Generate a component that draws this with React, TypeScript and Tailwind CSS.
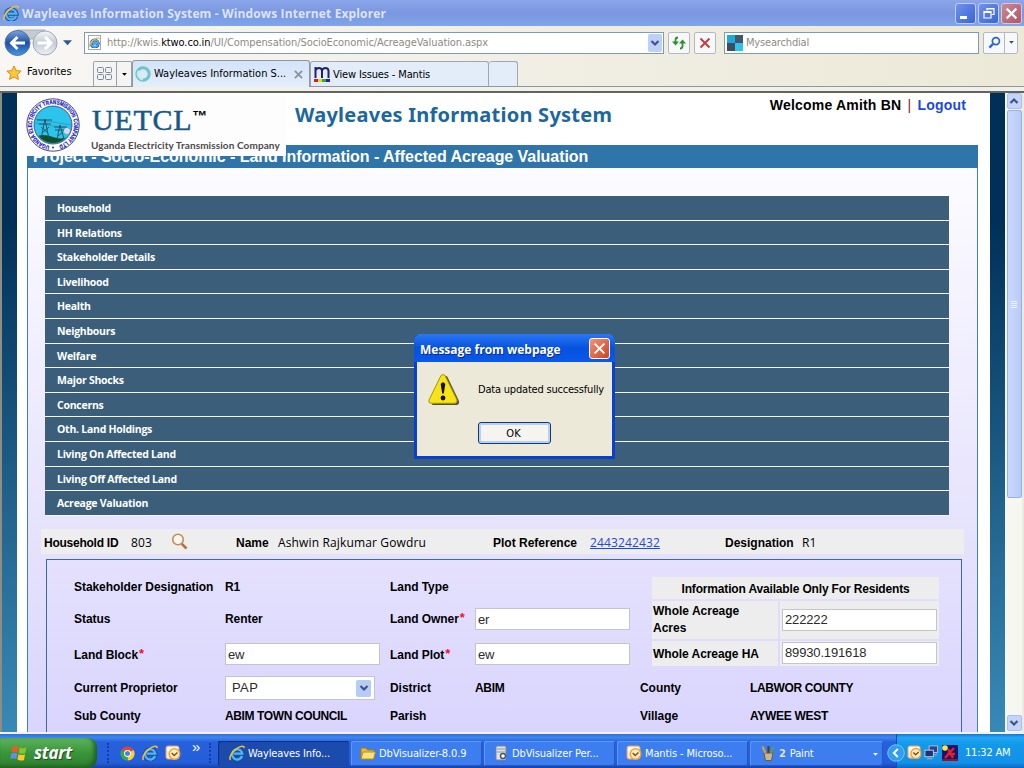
import type { ReactNode } from 'react';

const TAHOMA = "font-['DejaVu_Sans_Condensed','DejaVu_Sans',sans-serif] [font-stretch:condensed]";
const OPEN = "font-['Open_Sans','Noto_Sans',sans-serif]";

function IeIcon({ className }: { className: string }) {
  return (
    <svg viewBox="0 0 16 16" className={className}>
      <path d="M13.300 11.200A5.200 5.200 0 1 1 13.500 8.800H5" fill="none" stroke="#1450a4" strokeWidth="4" />
      <path d="M13.100 11A5.100 5.100 0 1 1 13.300 8.600H5" fill="none" stroke="#52b4f0" strokeWidth="2.400" />
      <path d="M1.600 14.800C-.6 13 3 6.600 8 3.400C11.500 1 15.600 .2 15 3.200" fill="none" stroke="#f7bd2c" strokeWidth="1.600" />
    </svg>
  );
}

function OutlookIcon({ className }: { className: string }) {
  return (
    <svg viewBox="0 0 16 16" className={className}>
      <rect x="1" y="1" width="13" height="13" rx="2" fill="#fbe9d2" stroke="#e6a262" />
      <path d="M2 2h11v4L8 9 2 6z" fill="#fffaf2" />
      <circle cx="9.500" cy="9" r="5.300" fill="#fdeebd" stroke="#eea23c" strokeWidth="1.400" />
      <path d="M6.700 8 9.200 10.500l3.300-3" fill="none" stroke="#8a4b12" strokeWidth="1.500" />
    </svg>
  );
}

function Chevron({ up = false, className }: { up?: boolean; className: string }) {
  return (
    <svg viewBox="0 0 10 8" className={className}>
      <path d={up ? 'M1.500 6 5 2.500 8.500 6' : 'M1.500 2 5 5.500 8.500 2'} fill="none" stroke="#3f5580" strokeWidth="2.200" />
    </svg>
  );
}

function Caret({ className }: { className: string }) {
  return (
    <svg viewBox="0 0 8 5" className={className}>
      <path d="M0 0h8L4 4.600z" fill="currentColor" />
    </svg>
  );
}

function TitleBar() {
  return (
    <div className="flex h-[26px] shrink-0 items-center bg-gradient-to-b from-[#8ba6ea] via-[#7a96df] to-[#7fa5ea] pl-[3px] pr-[2px]">
      <IeIcon className="h-4 w-4" />
      <div className={`${OPEN} ml-[3px] flex-1 whitespace-nowrap pt-px text-[12px] font-bold leading-[26px] tracking-[0.13px] text-[#dbe5fb]`}>
        Wayleaves Information System - Windows Internet Explorer
      </div>
      <div className="flex gap-[2px]">
        <div className="flex h-[21px] w-[21px] items-end rounded-[3px] border border-[#c3d0f3] bg-gradient-to-br from-[#6f92ea] to-[#3a63d8] p-1">
          <div className="h-[3px] w-[7px] bg-white" />
        </div>
        <div className="flex h-[21px] w-[21px] items-center justify-center rounded-[3px] border border-[#c3d0f3] bg-gradient-to-br from-[#6f92ea] to-[#3a63d8]">
          <svg viewBox="0 0 12 12" className="h-3 w-3">
            <path d="M4 3.500V1.500h7v6H8.500M4 2h7" fill="none" stroke="#fff" strokeWidth="1.200" />
            <path d="M1 4.500h7v6.500H1zM1 5.500h7" fill="none" stroke="#fff" strokeWidth="1.200" />
          </svg>
        </div>
        <div className="flex h-[21px] w-[21px] items-center justify-center rounded-[3px] border border-[#dcc5d6] bg-gradient-to-br from-[#c98a94] to-[#b0566a]">
          <svg viewBox="0 0 12 12" className="h-[13px] w-[13px]">
            <path d="M1.500 1.500l9 9M10.500 1.500l-9 9" stroke="#fff" strokeWidth="2" />
          </svg>
        </div>
      </div>
    </div>
  );
}

function NavBar() {
  return (
    <div className="flex h-[33px] shrink-0 items-center pl-[4px] pr-[6px]">
      <svg viewBox="0 0 54 28" className="h-[28px] w-[54px]">
        <defs>
          <linearGradient id="back" x1="0" y1="0" x2="0" y2="1">
            <stop offset="0" stopColor="#7aa4dd" />
            <stop offset=".5" stopColor="#1f4fa6" />
            <stop offset="1" stopColor="#3f9be8" />
          </linearGradient>
          <linearGradient id="fwd" x1="0" y1="0" x2="0" y2="1">
            <stop offset="0" stopColor="#f4f6f9" />
            <stop offset=".5" stopColor="#c3cbd6" />
            <stop offset="1" stopColor="#eef2f7" />
          </linearGradient>
        </defs>
        <path d="M13 1h28v9H13z" fill="#c4cad3" stroke="#a9b0ba" />
        <circle cx="13.500" cy="14" r="12.500" fill="url(#back)" stroke="#5a7194" />
        <circle cx="41" cy="14" r="12" fill="url(#fwd)" stroke="#a0a8b4" />
        <path d="M21 14H8M13.500 8 7.500 14l6 6" fill="none" stroke="#fff" strokeWidth="3" />
        <path d="M33.500 14h13M41 8l6 6-6 6" fill="none" stroke="#fff" strokeWidth="3" />
      </svg>
      <Caret className="ml-[5px] h-[6px] w-[9px] text-[#2d5c93]" />
      <div className="ml-[12px] flex h-[22px] w-[580px] items-center border border-[#7d9ab8] bg-white pl-[3px]">
        <div className="flex h-[15px] w-[13px] items-center justify-center border border-[#a9a9a9] bg-white">
          <IeIcon className="h-[11px] w-[11px]" />
        </div>
        <div className={`${TAHOMA} ml-[6px] flex-1 whitespace-nowrap pt-[2px] text-[11px] tracking-[-0.09px] text-[#8b8b85]`}>
          http://kwis.<span className="text-black">ktwo.co.in</span>/UI/Compensation/SocioEconomic/AcreageValuation.aspx
        </div>
        <div className="mr-px flex h-[18px] w-[14px] items-center justify-center rounded-[2px] bg-[#bcd0fa]">
          <Chevron className="h-[8px] w-[10px]" />
        </div>
      </div>
      <div className="ml-[4px] flex h-[22px] w-[22px] items-center justify-center rounded-[2px] border border-[#b3b9c4] bg-[#f7f8fa]">
        <svg viewBox="0 0 16 14" className="h-[14px] w-[16px]">
          <path d="M7 1.500Q4.500 1.500 4.500 4V7M9 12.500Q11.500 12.500 11.500 10V6" fill="none" stroke="#2f8f2f" strokeWidth="1.800" />
          <path d="M1 5.500h7L4.500 9.500zM8 7.500h7L11.500 3.500z" fill="#2f8f2f" />
        </svg>
      </div>
      <div className="ml-[4px] flex h-[22px] w-[22px] items-center justify-center rounded-[2px] border border-[#b3b9c4] bg-[#f7f8fa]">
        <svg viewBox="0 0 12 12" className="h-[12px] w-[12px]">
          <path d="M1.500 1.500l9 9M10.500 1.500l-9 9" stroke="#c63a40" strokeWidth="1.900" />
        </svg>
      </div>
      <div className="ml-[8px] flex h-[22px] w-[255px] items-center border border-[#7d9ab8] bg-white pl-[2px]">
        <div className="grid h-4 w-4 grid-cols-2 grid-rows-2">
          <span className="bg-[#1fa9d8]" />
          <span className="bg-[#44566b]" />
          <span className="bg-[#3d4c60]" />
          <span className="bg-[#2cc3ee]" />
        </div>
        <span className={`${TAHOMA} ml-[3px] pt-[2px] text-[11px] tracking-[-0.17px] text-[#8b8b85]`}>Mysearchdial</span>
      </div>
      <div className="ml-[4px] flex h-[22px] w-[35px] items-center rounded-[2px] border border-[#b3b9c4] bg-[#f7f8fa]">
        <div className="flex h-full w-[21px] items-center justify-center border-r border-[#b3b9c4]">
          <svg viewBox="0 0 14 14" className="h-[13px] w-[13px]">
            <circle cx="8.500" cy="5.500" r="3.800" fill="none" stroke="#2a62d8" strokeWidth="1.800" />
            <path d="M5.500 8.500 1.500 12.500" stroke="#2a62d8" strokeWidth="2.400" />
          </svg>
        </div>
        <Caret className="mx-auto h-[3px] w-[5px] text-[#27508f]" />
      </div>
    </div>
  );
}

function TabRow() {
  return (
    <div className="flex h-[28px] shrink-0 items-end border-b border-[#8f989f] pl-[6px]">
      <div className="flex h-[27px] w-[87px] items-center">
        <svg viewBox="0 0 16 16" className="h-4 w-4">
          <path d="M8 1l2.100 4.600 5 .5-3.700 3.300 1 5L8 12l-4.400 2.400 1-5L.9 6.100l5-.5z" fill="#ffc83a" stroke="#d98c1c" />
        </svg>
        <span className={`${TAHOMA} ml-[5px] text-[11px]`}>Favorites</span>
      </div>
      <div className="flex h-[25px] w-[39px] rounded-t-[2px] border border-b-0 border-[#9aa3ad] bg-[#f4f4f2]">
        <div className="flex w-[23px] items-center justify-center border-r border-[#9aa3ad]">
          <svg viewBox="0 0 16 14" className="h-[14px] w-[16px]">
            <g fill="#eef1f5" stroke="#7f8894">
              <rect x=".5" y=".5" width="6" height="5" rx="1" />
              <rect x="8.500" y=".5" width="6" height="5" rx="1" />
              <rect x=".5" y="7.500" width="6" height="5" rx="1" />
              <rect x="8.500" y="7.500" width="6" height="5" rx="1" />
            </g>
          </svg>
        </div>
        <Caret className="m-auto h-[3px] w-[5px] text-black" />
      </div>
      <div className="-mb-px flex h-[27px] w-[178px] items-center rounded-t-[3px] border border-b-0 border-[#8f989f] bg-gradient-to-b from-[#d3e3f9] to-[#e4eefb] pl-[2px]">
        <svg viewBox="0 0 16 16" className="h-4 w-4">
          <circle cx="8" cy="8" r="6.200" fill="none" stroke="#6cc6c6" strokeWidth="3" />
          <path d="M4 4.500A5.500 5.500 0 0 0 8 13.500" fill="none" stroke="#c2ecea" strokeWidth="1.800" />
        </svg>
        <span className={`${TAHOMA} ml-[3px] flex-1 whitespace-nowrap text-[11px]`}>Wayleaves Information S...</span>
        <svg viewBox="0 0 10 10" className="mr-[6px] h-[9px] w-[9px]">
          <path d="M1 1l8 8M9 1L1 9" stroke="#8b929b" strokeWidth="2" />
        </svg>
      </div>
      <div className="flex h-[25px] w-[179px] items-center rounded-t-[3px] border border-b-0 border-[#9fa8b2] bg-[#e3edfa] pl-[3px]">
        <svg viewBox="0 0 16 16" className="h-4 w-4">
          <path d="M1.500 12V1M1.500 4.500Q2.500 2 5 2T8 4.500V12M8 4.500Q9 2 11.500 2T14.500 4.500V12" fill="none" stroke="#20207a" strokeWidth="2" />
          <path d="M0 13h4v3H0z" fill="#c22" />
          <path d="M4 13h4v3H4z" fill="#e8d32a" />
          <path d="M8 13h4v3H8z" fill="#3a3" />
          <path d="M12 13h4v3h-4z" fill="#22a" />
        </svg>
        <span className={`${TAHOMA} ml-[3px] pt-[2px] text-[11px] tracking-[-0.14px]`}>View Issues - Mantis</span>
      </div>
      <div className="h-[25px] w-[29px] rounded-t-[3px] border border-b-0 border-l-0 border-[#9fa8b2] bg-[#e3edfa]" />
    </div>
  );
}

function Crest() {
  return (
    <svg viewBox="0 0 54 56" className="h-[56px] w-[54px]">
      <defs>
        <path id="ring" d="M23.500 48.800A21 21 0 1 1 30.500 48.800" />
        <clipPath id="disc"><circle cx="27" cy="28" r="18" /></clipPath>
      </defs>
      <circle cx="27" cy="28" r="26.200" fill="#fff" stroke="#4a4a78" />
      <circle cx="27" cy="28" r="19" fill="#2ac4ec" stroke="#333a66" strokeWidth=".8" />
      <g clipPath="url(#disc)">
        <path d="M8 40q9-4 19 0t20-3v12H8z" fill="#12502c" />
        <path d="M9 22l36 6M9 26l36 6" stroke="#3b7f95" strokeWidth=".5" />
        <path d="M15 42l4-20 4 20M11 23h15M13 27h12M16 36l7-6M22 36l-7-6M31 42l3-14 4 14M28 30h13M29 33h11M32 39l5-4" fill="none" stroke="#214f5f" strokeWidth=".9" />
        <circle cx="41" cy="34" r="3" fill="#e6d3f5" />
      </g>
      <text className="font-['Liberation_Sans',sans-serif] text-[6px] font-bold" fill="#1414c8" stroke="#1414c8" strokeWidth=".2">
        <textPath href="#ring" textLength="122" lengthAdjust="spacingAndGlyphs">UGANDA ELECTRICITY TRANSMISSION COMPANY LTD</textPath>
      </text>
      <circle cx="27" cy="50.500" r=".9" fill="#1414c8" />
    </svg>
  );
}

const sections = [
  'Household', 'HH Relations', 'Stakeholder Details', 'Livelihood', 'Health', 'Neighbours', 'Welfare',
  'Major Shocks', 'Concerns', 'Oth. Land Holdings', 'Living On Affected Land', 'Living Off Affected Land', 'Acreage Valuation',
];

function Label({ children, required = false, className = 'tracking-[-0.06px]' }: { children?: ReactNode; required?: boolean; className?: string }) {
  return (
    <div className={`whitespace-nowrap text-[12px] font-bold leading-[16px] ${className}`}>
      {children}
      {required && <span className="ml-[1px] inline-block h-[16px] align-top text-[13px] leading-[14px] text-[#f01030]">*</span>}
    </div>
  );
}

function Field({ value }: { value: string }) {
  return (
    <div className="flex h-[22px] w-[155px] items-center border border-[#c4c4cc] bg-white pl-[2px] pt-px text-[13px] tracking-[-0.15px] text-[#2b2b2b]">
      {value}
    </div>
  );
}

function Form() {
  return (
    <div className="ml-[18px] mt-[5px] h-[200px] w-[916px] border border-[#3b6ba0] pl-[27px]">
      <div className="flex h-[114px]">
        <div className="grid w-[578px] grid-cols-[151px_165px_85px_1fr] grid-rows-[34px_30px_40px] items-center pt-[10px]">
          <Label>Stakeholder Designation</Label>
          <Label>R1</Label>
          <Label>Land Type</Label>
          <div />
          <Label>Status</Label>
          <Label>Renter</Label>
          <Label required>Land Owner</Label>
          <Field value="er" />
          <Label className="pt-px tracking-[-0.06px]" required>Land Block</Label>
          <Field value="ew" />
          <Label className="pt-px tracking-[-0.06px]" required>Land Plot</Label>
          <Field value="ew" />
        </div>
        <div className="mt-[17px] grid h-[89px] w-[287px] grid-cols-[126px_159px] grid-rows-[22px_38px_25px] gap-[2px]">
          <div className="col-span-2 flex items-center justify-center bg-[#ededed]">
            <Label className="pt-px tracking-[-0.16px]">Information Available Only For Residents</Label>
          </div>
          <div className="flex items-center bg-[#ededed] pl-px text-[12px] font-bold leading-[17px]">
            Whole Acreage<br />Acres
          </div>
          <div className="flex items-center bg-[#ededed] pb-px pl-[2px]"><Field value="222222" /></div>
          <div className="flex items-center bg-[#ededed] pl-px"><Label>Whole Acreage HA</Label></div>
          <div className="flex items-center bg-[#ededed] pb-[2px] pl-[2px]"><Field value="89930.191618" /></div>
        </div>
      </div>
      <div className="grid grid-cols-[151px_165px_85px_165px_110px_1fr] grid-rows-[28px_28px] items-center">
        <Label>Current Proprietor</Label>
        <div className="flex h-[24px] w-[150px] items-center justify-between border border-[#c4c4cc] bg-white pl-[6px] pr-[3px] text-[13px] text-[#2b2b2b]">
          <span className="tracking-[0.4px]">PAP</span>
          <div className="flex h-[17px] w-[15px] items-center justify-center rounded-[2px] bg-[#b5ccf6]">
            <Chevron className="h-[8px] w-[10px]" />
          </div>
        </div>
        <Label>District</Label>
        <Label className="tracking-[-0.3px]">ABIM</Label>
        <Label>County</Label>
        <Label className="tracking-[-0.38px]">LABWOR COUNTY</Label>
        <Label>Sub County</Label>
        <Label className="tracking-[-0.38px]">ABIM TOWN COUNCIL</Label>
        <Label>Parish</Label>
        <div />
        <Label>Village</Label>
        <Label className="tracking-[-0.28px]">AYWEE WEST</Label>
      </div>
    </div>
  );
}

function WebPage() {
  return (
    <div className="relative flex min-w-0 flex-1 overflow-hidden">
      <div className="w-[17px] shrink-0 border-l-2 border-[#8f8d82] bg-[linear-gradient(#003058_0%,#003058_20%,#1f6089_62%,#3889b7_100%)]" />
      <div className="flex w-[973px] flex-col bg-white pl-[10px] pr-[12px] font-['Liberation_Sans',Arial,sans-serif] text-black">
        <div className="flex h-[52px] shrink-0 justify-between pl-[268px] pr-[12px]">
          <h1 className="mt-[8px] whitespace-nowrap font-['Noto_Sans',sans-serif] text-[20px] font-bold leading-[28px] tracking-[0.25px] text-[#1a689f]">
            Wayleaves Information System
          </h1>
          <div className="mt-[3px] whitespace-nowrap text-[14px] font-bold leading-[18px] tracking-[0.2px]">
            Welcome Amith BN <span className="mx-[2px] font-normal text-[#8a2030]">|</span> <span className="text-[#1c48e0]">Logout</span>
          </div>
        </div>
        <div className="h-[23px] shrink-0 whitespace-nowrap bg-[#2f75a9] pl-[6px] text-[16px] font-bold leading-[23px] tracking-[-0.05px] text-white">
          Project - Socio-Economic - Land Information - Affected Acreage Valuation
        </div>
        <div className="flex-1 border-x border-[#3f84ad] bg-gradient-to-b from-[#fcfcff] via-[#eae7fd] to-[#d8d3fd]">
          <div className="ml-[17px] mt-[28px] flex h-[320px] w-[904px] flex-col">
            {sections.map((s) => (
              <div
                key={s}
                className={`${OPEN} flex flex-1 items-center border-b border-[#f4f6fa] bg-[#3b5f7b] pl-[12px] pt-[2px] text-[10.500px] font-bold tracking-[-0.26px] text-white`}
              >
                {s}
              </div>
            ))}
          </div>
          <div className="ml-[13px] mt-[13px] flex h-[25px] w-[923px] items-center whitespace-nowrap bg-[#eeeeee] pl-[3px] pt-[2px]">
            <Label className="w-[87px] tracking-[-0.25px]">Household ID</Label>
            <span className={`${OPEN} w-[40px] text-[12px] tracking-[0.14px]`}>803</span>
            <svg viewBox="0 0 17 17" className="-mt-[2px] h-[17px] w-[17px]">
              <circle cx="7" cy="6.500" r="5.300" fill="#fdf6ee" stroke="#c58a55" strokeWidth="1.600" />
              <path d="M10.800 10.800 15.500 15.500" stroke="#b9703a" strokeWidth="2.600" />
            </svg>
            <Label className="ml-[48px] w-[42px]">Name</Label>
            <span className={`${OPEN} w-[215px] text-[12px] tracking-[0.14px]`}>Ashwin Rajkumar Gowdru</span>
            <Label className="w-[97px]">Plot Reference</Label>
            <span className={`${OPEN} w-[135px] text-[12px] tracking-[0.14px] text-[#1c48e0] underline`}>2443242432</span>
            <Label className="w-[77px]">Designation</Label>
            <span className={`${OPEN} text-[12px]`}>R1</span>
          </div>
          <Form />
        </div>
      </div>
      <div className="w-[15px] shrink-0 bg-[linear-gradient(#003058_0%,#003058_20%,#1f6089_62%,#3889b7_100%)]" />
      <div className="absolute left-[20px] top-[3px] flex h-[60px] w-[266px] items-start bg-[#fdfdfd] pl-[6px] pt-px">
        <Crest />
        <div className="ml-[11px] flex flex-col">
          <div className="flex h-[41px] items-start">
            <span className="mt-[3px] whitespace-nowrap pl-px font-['Liberation_Serif',serif] text-[30px] leading-[40px] tracking-[0.7px] text-[#17588a] [-webkit-text-stroke:0.5px_#17588a]">
              UETCL
            </span>
            <span className="mt-[9px] text-[15px] font-bold leading-[20px] text-black font-['Liberation_Sans',sans-serif]">™</span>
          </div>
          <span className="whitespace-nowrap font-['Lato',sans-serif] text-[10px] font-bold leading-[15px] tracking-[0.1px] text-[#4a4a4a]">
            Uganda Electricity Transmission Company
          </span>
        </div>
      </div>
    </div>
  );
}

function ScrollBar() {
  return (
    <div className="flex w-[19px] shrink-0 flex-col items-center border-r-2 border-[#ecebe0] bg-[#f7f7f2] pl-px">
      <div className="flex h-[16px] w-[15px] items-center justify-center rounded-[2px] border border-[#a9bdf0] bg-[#c4d4fb]">
        <Chevron up className="h-[8px] w-[10px]" />
      </div>
      <div className="mt-px flex h-[388px] w-[15px] flex-col items-center justify-center gap-px rounded-[2px] border border-[#98b0ea] bg-gradient-to-r from-[#cad8fc] to-[#b9cbf8]">
        <span className="h-px w-[6px] bg-[#eef4fe]" />
        <span className="h-px w-[6px] bg-[#eef4fe]" />
        <span className="h-px w-[6px] bg-[#eef4fe]" />
        <span className="h-px w-[6px] bg-[#eef4fe]" />
      </div>
      <div className="mt-auto mb-px flex h-[16px] w-[15px] items-center justify-center rounded-[2px] border border-[#a9bdf0] bg-[#c4d4fb]">
        <Chevron className="h-[8px] w-[10px]" />
      </div>
    </div>
  );
}

function MessageBox() {
  return (
    <div className="absolute left-[414px] top-[334px] flex h-[125px] w-[201px] flex-col rounded-t-[7px] border-[3px] border-t-0 border-[#0a3fd0] bg-[#ece9d8]">
      <div className="-mx-[3px] flex h-[28px] items-center justify-between rounded-t-[7px] bg-gradient-to-b from-[#2a78f5] via-[#0552dd] to-[#0a58ee] pl-[6px] pr-[5px]">
        <span className={`${OPEN} mt-[4px] whitespace-nowrap text-[12px] font-bold text-white [text-shadow:1px_1px_0_#0a2a8a]`}>Message from webpage</span>
        <div className="mt-[1px] flex h-[21px] w-[21px] items-center justify-center rounded-[3px] border border-white bg-gradient-to-br from-[#ee9478] to-[#cf3d1c]">
          <svg viewBox="0 0 12 12" className="h-[13px] w-[13px]">
            <path d="M1.500 1.500l9 9M10.500 1.500l-9 9" stroke="#fff" strokeWidth="1.800" />
          </svg>
        </div>
      </div>
      <div className="mt-[11px] flex h-[34px] items-start pl-[10px]">
        <svg viewBox="0 0 33 33" className="h-[33px] w-[33px]">
          <path d="M17.500 3Q19 2 20.500 4L32 28Q32.500 31.500 30 32H5z" fill="#55533f" />
          <path d="M14 2.500Q16 .5 18 2.500L30 27Q30.500 30 28 30.300H4Q1 30 2 27z" fill="#f8e414" stroke="#a8920e" />
          <path d="M13.700 11Q16 7.500 18.300 11L16.800 20.500H15.200z" fill="#111" />
          <circle cx="16" cy="25" r="2.400" fill="#111" />
        </svg>
        <span className={`${TAHOMA} ml-[18px] mt-[9px] whitespace-nowrap text-[11px] leading-[16px] tracking-[-0.2px] text-black`}>
          Data updated successfully
        </span>
      </div>
      <div className={`${TAHOMA} ml-[61px] mt-[15px] flex h-[22px] w-[73px] items-center justify-center rounded-[3px] border border-[#0c3a78] bg-[#f5f4ee] pr-[2px] pt-[2px] text-[11px] text-black [box-shadow:inset_0_0_0_2px_#b9cff5]`}>
        OK
      </div>
    </div>
  );
}

function Task({ icon, label, active = false, className = 'w-[131px]' }: { icon: ReactNode; label: ReactNode; active?: boolean; className?: string }) {
  return (
    <div
      className={`${TAHOMA} flex h-[25px] shrink-0 items-center gap-[3px] rounded-[2px] pl-[9px] text-[11px] tracking-[-0.12px] text-white ${
        active ? 'bg-[#1c4bae] shadow-[inset_1px_1px_1px_#0d2f80]' : 'bg-[#3c7df0] shadow-[inset_1px_1px_0_#5d98fa,inset_-1px_-1px_0_#2457c8]'
      } ${className}`}
    >
      {icon}
      <span className="whitespace-nowrap pt-[2px]">{label}</span>
    </div>
  );
}

function Grip() {
  return <div className="h-[20px] border-l-2 border-dotted border-[#123fa0]" />;
}

function TaskBar() {
  return (
    <div className="flex h-[34px] shrink-0 items-center bg-[linear-gradient(#2e6fd6_0%,#3f86f0_10%,#2660dc_24%,#245edb_85%,#1941a5_100%)]">
      <div className="mt-[4px] flex h-[30px] w-[97px] shrink-0 items-center rounded-r-[9px] bg-gradient-to-b from-[#5cb35c] via-[#3a953a] to-[#2f7f2f] pl-[10px] shadow-[inset_-3px_-2px_4px_#1f5f1f]">
        <svg viewBox="0 0 18 18" className="h-[18px] w-[18px]">
          <path d="M2.500 3Q5.500 1 8.500 3L7.500 8.500Q4.500 7 1.500 8.500z" fill="#ee5a25" />
          <path d="M9.700 3.500Q13 5 16.500 3.300L15.300 9Q12 10.500 8.700 9z" fill="#85c52b" />
          <path d="M1.300 9.700Q4.500 8 7.300 9.700L6.300 15Q3.500 13.400.3 15z" fill="#5c90f0" />
          <path d="M8.500 10.200Q12 11.700 15 10.200L14 16Q10.500 17.400 7.400 15.600z" fill="#fbc92e" />
        </svg>
        <span className={`${OPEN} ml-[6px] text-[17px] font-bold italic leading-[24px] tracking-[-0.25px] text-white [text-shadow:1px_1px_1px_#1d4f1d]`}>start</span>
      </div>
      <div className="ml-[10px] mt-[4px] flex items-center"><Grip /></div>
      <svg viewBox="0 0 16 16" className="ml-[11px] mt-[4px] h-[15px] w-[15px]">
        <path d="M8 8 1.500 4.200A7.500 7.500 0 0 1 14.500 4.200z" fill="#df4530" />
        <path d="M8 8 14.500 4.200A7.500 7.500 0 0 1 8 15.500z" fill="#fbd12f" />
        <path d="M8 8 8 15.500A7.500 7.500 0 0 1 1.500 4.200z" fill="#37a651" />
        <circle cx="8" cy="8" r="3.700" fill="#fff" />
        <circle cx="8" cy="8" r="2.700" fill="#4285e8" />
      </svg>
      <IeIcon className="ml-[7px] mt-[4px] h-4 w-4" />
      <OutlookIcon className="ml-[7px] mt-[4px] h-[16px] w-[16px]" />
      <span className="ml-[11px] -mt-[8px] w-[9px] font-['Liberation_Sans',sans-serif] text-[15px] leading-[12px] text-white">»</span>
      <div className="ml-[8px] mt-[4px]"><Grip /></div>
      <div className="ml-[7px] mt-[4px] flex gap-[2px]">
        <Task active icon={<IeIcon className="ml-[2px] h-4 w-4" />} label="Wayleaves Info..." />
        <Task
          icon={
            <svg viewBox="0 0 16 16" className="h-4 w-4">
              <path d="M1 3h5l1.500 2H14v9H1z" fill="#e8b93a" stroke="#a87b14" />
              <path d="M3 7h12.500L13.500 14H1z" fill="#fbe27a" stroke="#b98d1c" />
            </svg>
          }
          label="DbVisualizer-8.0.9"
        />
        <Task
          icon={
            <svg viewBox="0 0 16 16" className="h-4 w-4">
              <rect x="3" y="1" width="10" height="14" rx="1.500" fill="#dfe2e6" stroke="#7d858f" />
              <path d="M4 4h8M4 7h8" stroke="#8d959f" />
              <circle cx="10" cy="11" r="2.500" fill="#fff" stroke="#4f5965" strokeWidth="1.500" />
            </svg>
          }
          label="DbVisualizer Per..."
        />
        <Task icon={<OutlookIcon className="h-4 w-4" />} label="Mantis - Microso..." />
        <div className="relative">
          <Task
            className="w-[133px]"
            icon={
              <svg viewBox="0 0 16 16" className="ml-[1px] h-4 w-4">
                <path d="M4 8h9l-1.500 7.500h-6z" fill="#c9b68e" stroke="#6d5c36" />
                <path d="M5.500 8 2.500 1.500" stroke="#e0a13a" strokeWidth="2" />
                <path d="M8.500 8V1" stroke="#5a3a22" strokeWidth="2" />
                <path d="M11 8l2.500-6" stroke="#58a04a" strokeWidth="2" />
              </svg>
            }
            label={<><b className="mr-[4px] text-[#dfe3c8]">2</b>Paint</>}
          />
          <Caret className="absolute right-[5px] top-[12px] h-[3px] w-[5px] text-white" />
        </div>
      </div>
      <div className="relative ml-auto flex h-full w-[128px] shrink-0 items-center border-l border-[#0d4fb5] bg-[linear-gradient(#1277d5_0%,#23a5f5_10%,#129ae8_30%,#1290e8_85%,#0c68bd_100%)] pl-[10px] pt-[3px]">
        <svg viewBox="0 0 18 18" className="absolute -left-[10px] top-[10px] h-[18px] w-[18px]">
          <circle cx="9" cy="9" r="8.300" fill="#2f9df0" stroke="#8fd0fb" strokeWidth=".8" />
          <path d="M10.800 5 6.800 9l4 4" fill="none" stroke="#fff" strokeWidth="2" />
        </svg>
        <OutlookIcon className="h-[15px] w-[15px]" />
        <svg viewBox="0 0 16 16" className="ml-[2px] h-[15px] w-[15px]">
          <rect x="5.500" y="1" width="9" height="7" fill="#2b3f8c" stroke="#b9c0d0" />
          <rect x="1" y="5.500" width="9" height="7" fill="#1f3278" stroke="#c9cfdb" />
          <path d="M3 14.500h6M11 10.500h3" stroke="#9aa3b5" strokeWidth="1.500" />
        </svg>
        <svg viewBox="0 0 16 16" className="ml-[3px] h-4 w-4">
          <path d="M0 0h16v16H0z" fill="#15156e" />
          <circle cx="3" cy="3" r="2.800" fill="#f7e94a" />
          <path d="M3 13 12 3M6 4l5 9M5 9h8" stroke="#e3202c" strokeWidth="2.400" />
          <path d="M0 14h16v2H0z" fill="#a01018" />
        </svg>
        <span className={`${TAHOMA} ml-[7px] whitespace-nowrap pt-[2px] text-[11px] tracking-[-0.2px] text-white`}>11:32 AM</span>
      </div>
    </div>
  );
}

export default function App() {
  return (
    <div className="relative flex h-[768px] w-[1024px] flex-col overflow-hidden bg-white text-black">
      <TitleBar />
      <div className="flex h-[65px] shrink-0 flex-col bg-gradient-to-r from-[#f8f7f4] via-[#f1efe5] to-[#ece9d8]">
        <NavBar />
        <TabRow />
        <div className="h-[4px] bg-[#f1f0e8]" />
      </div>
      <div className="h-[2px] shrink-0 bg-[#62645f]" />
      <div className="flex min-h-0 flex-1">
        <WebPage />
        <ScrollBar />
      </div>
      <div className="h-[2px] shrink-0 bg-[#f3f1e8]" />
      <TaskBar />
      <MessageBox />
    </div>
  );
}
